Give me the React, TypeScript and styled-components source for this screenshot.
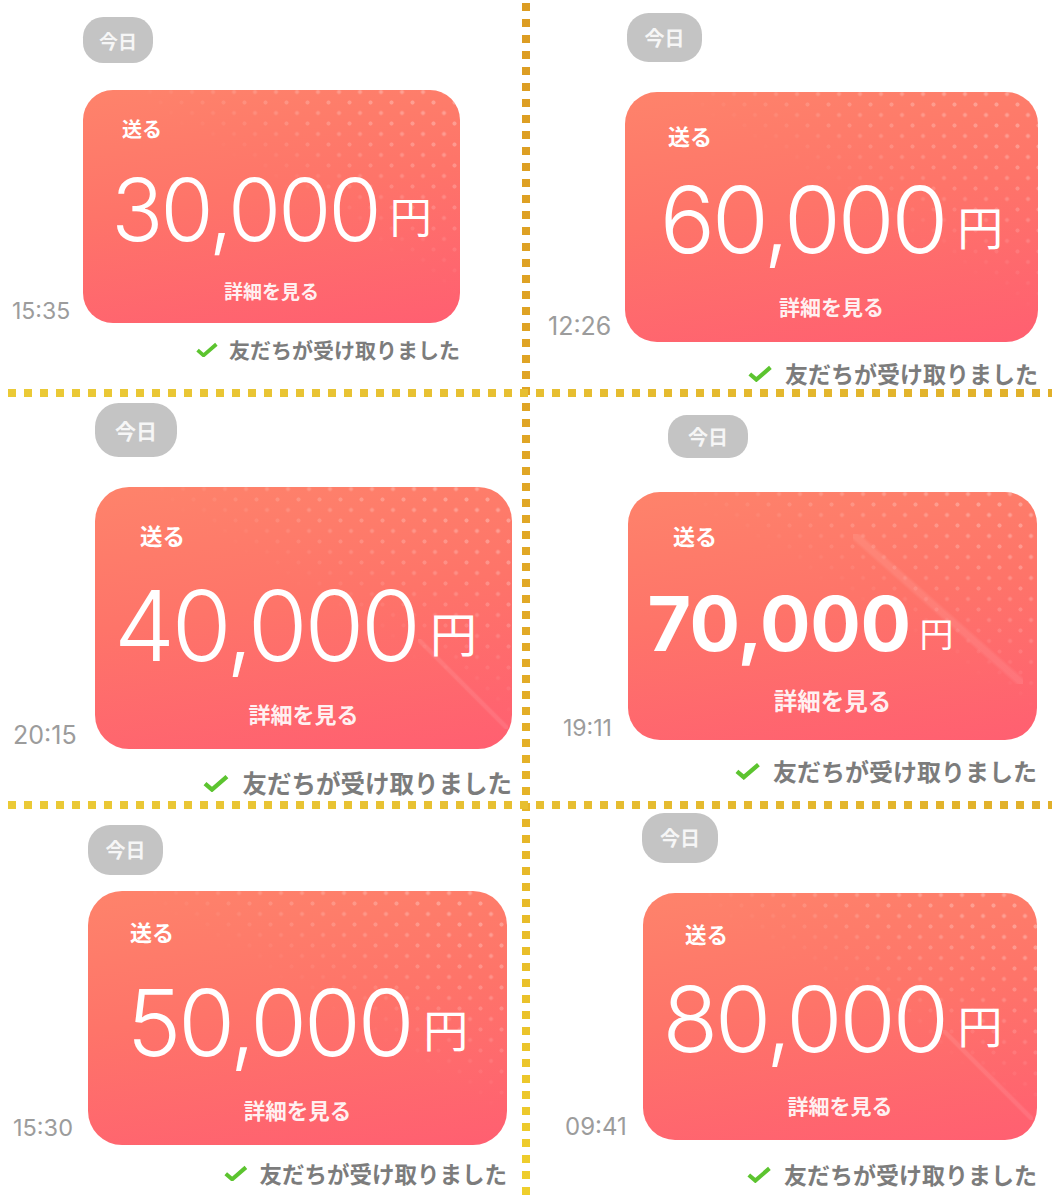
import React from "react";
import styled, { createGlobalStyle } from "styled-components";

const JP = `"Noto Sans CJK JP", "Noto Sans", sans-serif`;
const NUM = `Inter, "Liberation Sans", sans-serif`;

const GlobalStyle = createGlobalStyle`
  html, body {
    margin: 0;
    padding: 0;
    background: #fff;
  }
  body {
    font-family: ${JP};
  }
`;

type Shot = {
  id: string;
  row: number;
  col: number;
  amount: string;
  heavy?: boolean;
  time: string;
  streak?: "short" | "long";
  pill: { left: number; top: number; w: number; h: number; size: number };
  card: { left: number; top: number; w: number; h: number; r: number };
  label: { left: number; top: number; size: number };
  figure: { top: number; size: number; yen: number; shift: number; lift: number };
  detail: { bottom: number; size: number };
  clock: { left: number; size: number; lift: number };
  receipt: { gap: number; size: number };
};

const shots: Shot[] = [
  {
    id: "a", row: 1, col: 1, amount: "30,000", time: "15:35",
    pill: { left: 83, top: 17, w: 70, h: 46, size: 19 },
    card: { left: 83, top: 90, w: 377, h: 233, r: 30 },
    label: { left: 39, top: 32, size: 20 },
    figure: { top: 88, size: 86, yen: 42, shift: 0, lift: 8 },
    detail: { bottom: 23, size: 19 },
    clock: { left: 12, size: 23, lift: 0 },
    receipt: { gap: 19, size: 21 },
  },
  {
    id: "b", row: 1, col: 3, amount: "60,000", time: "12:26",
    pill: { left: 97, top: 13, w: 75, h: 49, size: 20 },
    card: { left: 95, top: 92, w: 413, h: 250, r: 32 },
    label: { left: 43, top: 35, size: 22 },
    figure: { top: 93, size: 92, yen: 46, shift: 0, lift: 8 },
    detail: { bottom: 25, size: 21 },
    clock: { left: 18, size: 25, lift: 3 },
    receipt: { gap: 23, size: 23 },
  },
  {
    id: "c", row: 3, col: 1, amount: "40,000", time: "20:15", streak: "short",
    pill: { left: 95, top: 6, w: 82, h: 54, size: 21 },
    card: { left: 95, top: 90, w: 417, h: 262, r: 34 },
    label: { left: 45, top: 40, size: 22.5 },
    figure: { top: 102, size: 97, yen: 47, shift: -16, lift: 9 },
    detail: { bottom: 25, size: 22 },
    clock: { left: 13, size: 25, lift: 1 },
    receipt: { gap: 25, size: 24.5 },
  },
  {
    id: "d", row: 3, col: 3, amount: "70,000", heavy: true, time: "19:11", streak: "long",
    pill: { left: 138, top: 18, w: 80, h: 43, size: 20 },
    card: { left: 98, top: 95, w: 409, h: 248, r: 32 },
    label: { left: 45, top: 35, size: 22 },
    figure: { top: 104, size: 75, yen: 34, shift: -64, lift: 4 },
    detail: { bottom: 28, size: 23.5 },
    clock: { left: 33, size: 23, lift: 0 },
    receipt: { gap: 22, size: 24 },
  },
  {
    id: "e", row: 5, col: 1, amount: "50,000", time: "15:30",
    pill: { left: 88, top: 16, w: 75, h: 50, size: 20 },
    card: { left: 88, top: 82, w: 419, h: 254, r: 34 },
    label: { left: 42, top: 32, size: 22 },
    figure: { top: 97, size: 92, yen: 45, shift: 0, lift: 8 },
    detail: { bottom: 25, size: 21.5 },
    clock: { left: 13, size: 23.5, lift: 6 },
    receipt: { gap: 20, size: 22.5 },
  },
  {
    id: "f", row: 5, col: 3, amount: "80,000", time: "09:41", streak: "short",
    pill: { left: 112, top: 4, w: 76, h: 50, size: 20 },
    card: { left: 113, top: 84, w: 394, h: 247, r: 32 },
    label: { left: 42, top: 33, size: 21.5 },
    figure: { top: 92, size: 91, yen: 45, shift: -15, lift: 8 },
    detail: { bottom: 24, size: 21 },
    clock: { left: 35, size: 24, lift: 1 },
    receipt: { gap: 26, size: 23 },
  },
];

const CELL_W = 522;

export default function App() {
  return (
    <>
      <GlobalStyle />
      <Board>
        {shots.map((s) => (
          <TransferShot key={s.id} shot={s} />
        ))}
        <VRule />
        <HRule $row={2} />
        <HRule $row={4} />
      </Board>
    </>
  );
}

function TransferShot({ shot }: { shot: Shot }) {
  const { pill, card, label, figure, detail, clock, receipt } = shot;
  // line boxes are line-height 1; glyph ink sits a little below the line top
  const padTop = label.top - 0.14 * label.size;
  const figureGap = figure.top - 0.2 * figure.size - padTop - label.size;

  return (
    <Cell $row={shot.row} $col={shot.col}>
      <DatePill
        $left={pill.left}
        $top={pill.top}
        $w={pill.w}
        $h={pill.h}
        $size={pill.size}
      >
        今日
      </DatePill>

      <MessageRow $top={card.top - pill.top - pill.h} $left={clock.left}>
        <Clock
          $w={card.left - clock.left}
          $size={clock.size}
          $lift={clock.lift}
        >
          {shot.time}
        </Clock>
        <Card
          $w={card.w}
          $h={card.h}
          $r={card.r}
          $padTop={padTop}
          $padBottom={detail.bottom}
          $streak={shot.streak}
        >
          <CardLabel $left={label.left} $size={label.size}>
            送る
          </CardLabel>
          <Figure $gap={figureGap} $size={figure.size} $shift={figure.shift}>
            <Digits $heavy={shot.heavy}>{shot.amount}</Digits>
            <Yen $size={figure.yen} $lift={figure.lift}>
              円
            </Yen>
          </Figure>
          <DetailLink $size={detail.size}>詳細を見る</DetailLink>
        </Card>
      </MessageRow>

      <Receipt
        $gap={receipt.gap - 0.14 * receipt.size}
        $right={CELL_W - card.left - card.w}
        $size={receipt.size}
      >
        <CheckMark
          width={receipt.size * 1.14}
          height={receipt.size * 0.74}
          viewBox="0 0 28 18"
        >
          <path d="M3 9.5 L10 15.5 L25 2.5" />
        </CheckMark>
        <ReceiptText>友だちが受け取りました</ReceiptText>
      </Receipt>
    </Cell>
  );
}

const Board = styled.div`
  display: grid;
  grid-template-columns: 522px 8px 522px;
  grid-template-rows: 389px 8px 404px 8px 391px;
  width: 1052px;
  height: 1200px;
  overflow: hidden;
  background: #fff;
`;

const VRule = styled.div`
  grid-column: 2;
  grid-row: 1 / -1;
  background: linear-gradient(to bottom, #dc9c22, #e2aa26 55%, #efcf2c);
  -webkit-mask-image: repeating-linear-gradient(
    to bottom,
    transparent 0 3px,
    #000 3px 11px,
    transparent 11px 16px
  );
  mask-image: repeating-linear-gradient(
    to bottom,
    transparent 0 3px,
    #000 3px 11px,
    transparent 11px 16px
  );
`;

const HRule = styled.div<{ $row: number }>`
  grid-column: 1 / -1;
  grid-row: ${(p) => p.$row};
  background: linear-gradient(to right, #ebca36, #e7bf31 50%, #e1b02a);
  -webkit-mask-image: repeating-linear-gradient(
    to right,
    transparent 0 8px,
    #000 8px 16px
  );
  mask-image: repeating-linear-gradient(to right, transparent 0 8px, #000 8px 16px);
`;

const Cell = styled.section<{ $row: number; $col: number }>`
  grid-row: ${(p) => p.$row};
  grid-column: ${(p) => p.$col};
  display: flex;
  flex-direction: column;
  align-items: flex-start;
  background: #fff;
  overflow: hidden;
  font-family: ${JP};
`;

const DatePill = styled.div<{
  $left: number;
  $top: number;
  $w: number;
  $h: number;
  $size: number;
}>`
  margin: ${(p) => p.$top}px 0 0 ${(p) => p.$left}px;
  width: ${(p) => p.$w}px;
  height: ${(p) => p.$h}px;
  border-radius: ${(p) => p.$h * 0.44}px;
  background: #c4c4c4;
  color: #f6f6f6;
  font-size: ${(p) => p.$size}px;
  font-weight: 700;
  display: flex;
  align-items: center;
  justify-content: center;
  line-height: 1;
`;

const MessageRow = styled.div<{ $top: number; $left: number }>`
  display: flex;
  align-items: flex-end;
  margin-top: ${(p) => p.$top}px;
  padding-left: ${(p) => p.$left}px;
`;

const Clock = styled.div<{ $w: number; $size: number; $lift: number }>`
  flex: none;
  width: ${(p) => p.$w}px;
  margin-bottom: ${(p) => p.$lift}px;
  font-family: ${NUM};
  font-size: ${(p) => p.$size}px;
  line-height: 1;
  color: #9c9c9c;
`;

const Card = styled.div<{
  $w: number;
  $h: number;
  $r: number;
  $padTop: number;
  $padBottom: number;
  $streak?: "short" | "long";
}>`
  position: relative;
  isolation: isolate;
  overflow: hidden;
  box-sizing: border-box;
  flex: none;
  width: ${(p) => p.$w}px;
  height: ${(p) => p.$h}px;
  border-radius: ${(p) => p.$r}px;
  padding: ${(p) => p.$padTop}px 0 ${(p) => p.$padBottom}px;
  display: flex;
  flex-direction: column;
  color: #fff;
  background: linear-gradient(172deg, #fe836b 0%, #fe7469 45%, #ff5f71 100%);

  &::before {
    content: "";
    position: absolute;
    inset: 0;
    z-index: -1;
    background-image: radial-gradient(circle, rgba(255, 255, 255, 0.27) 1.7px, transparent 2.4px),
      radial-gradient(circle, rgba(255, 255, 255, 0.27) 1.7px, transparent 2.4px);
    background-size: 21px 21px;
    background-position: 4px 2px, 14.5px 12.5px;
    -webkit-mask-image: linear-gradient(to bottom left, #000 10%, rgba(0, 0, 0, 0.55) 30%, transparent 45%);
    mask-image: linear-gradient(to bottom left, #000 10%, rgba(0, 0, 0, 0.55) 30%, transparent 45%);
  }

  &::after {
    content: "";
    position: absolute;
    z-index: -1;
    display: ${(p) => (p.$streak ? "block" : "none")};
    right: ${(p) => (p.$streak === "long" ? 14 : 4)}px;
    bottom: ${(p) => (p.$streak === "long" ? 56 : 20)}px;
    width: ${(p) => (p.$streak === "long" ? 170 : 90)}px;
    height: ${(p) => (p.$streak === "long" ? 150 : 90)}px;
    background: linear-gradient(
      to top right,
      transparent 47.5%,
      rgba(255, 255, 255, 0.09) 49%,
      rgba(255, 255, 255, 0.09) 51%,
      transparent 52.5%
    );
  }
`;

const CardLabel = styled.div<{ $left: number; $size: number }>`
  padding-left: ${(p) => p.$left}px;
  font-size: ${(p) => p.$size}px;
  font-weight: 700;
  line-height: 1;
`;

const Figure = styled.div<{ $gap: number; $size: number; $shift: number }>`
  margin-top: ${(p) => p.$gap}px;
  padding-right: ${(p) => Math.max(0, -p.$shift)}px;
  font-size: ${(p) => p.$size}px;
  line-height: 1;
  text-align: center;
  white-space: nowrap;
`;

const Digits = styled.span<{ $heavy?: boolean }>`
  font-family: ${NUM};
  font-weight: ${(p) => (p.$heavy ? 700 : 300)};
  letter-spacing: ${(p) => (p.$heavy ? "-0.005em" : "-0.033em")};
`;

const Yen = styled.span<{ $size: number; $lift: number }>`
  font-family: ${JP};
  font-size: ${(p) => p.$size}px;
  font-weight: 400;
  vertical-align: ${(p) => p.$lift}px;
  margin-left: ${(p) => p.$size * 0.26}px;
`;

const DetailLink = styled.div<{ $size: number }>`
  margin-top: auto;
  font-size: ${(p) => p.$size}px;
  font-weight: 700;
  line-height: 1;
  color: rgba(255, 255, 255, 0.92);
  text-align: center;
`;

const Receipt = styled.div<{ $gap: number; $right: number; $size: number }>`
  align-self: stretch;
  display: flex;
  align-items: center;
  justify-content: flex-end;
  gap: ${(p) => p.$size * 0.5}px;
  margin-top: ${(p) => p.$gap}px;
  padding-right: ${(p) => p.$right}px;
  font-size: ${(p) => p.$size}px;
  line-height: 1;
`;

const CheckMark = styled.svg`
  flex: none;
  fill: none;
  stroke: #5cc42f;
  stroke-width: 4.4;
  stroke-linejoin: miter;
`;

const ReceiptText = styled.span`
  font-weight: 700;
  color: #7c7c7c;
  white-space: nowrap;
`;
